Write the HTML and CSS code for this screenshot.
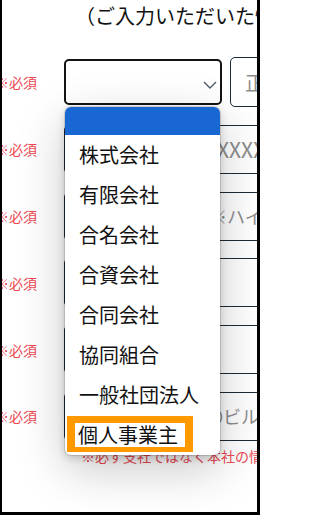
FILE: index.html
```html
<!DOCTYPE html>
<html lang="ja">
<head>
<meta charset="utf-8">
<title>お問い合わせフォーム</title>
<link rel="stylesheet" href="styles.css">
</head>
<body>
<div class="frame">
  <div class="lead"><span class="lead-text">（ご入力いただいた情報は、お問い合わせ対応にのみ使用いたします）</span></div>
  <form class="form">
    <div class="rows">
      <div class="row first">
        <span class="req">※必須</span>
        <div class="fields">
          <div class="select">
            <svg class="chev" width="14" height="8" viewBox="0 0 14 8"><polyline points="1,1 7,7 13,1" fill="none" stroke="#4f5a64" stroke-width="1.4"/></svg>
          </div>
          <input class="input short" type="text" placeholder="正式名称">
        </div>
      </div>
      <div class="row">
        <span class="req">※必須</span>
        <input class="input tel" type="text" placeholder="例）〇〇〇〇XXXXXXXX">
      </div>
      <div class="row">
        <span class="req">※必須</span>
        <input class="input" type="text" placeholder="例）〇〇〇〇〇 ※ハイフンなし">
      </div>
      <div class="row">
        <span class="req">※必須</span>
        <input class="input" type="text" placeholder="">
      </div>
      <div class="row">
        <span class="req">※必須</span>
        <input class="input" type="text" placeholder="">
      </div>
      <div class="row">
        <span class="req">※必須</span>
        <input class="input" type="text" placeholder="例）〇〇〇〇〇〇ビル">
      </div>
    </div>
    <p class="note">※必ず支社ではなく本社の情報を入力してください</p>
  </form>
  <ul class="popup">
    <li class="opt blank"></li>
    <li class="opt">株式会社</li>
    <li class="opt">有限会社</li>
    <li class="opt">合名会社</li>
    <li class="opt">合資会社</li>
    <li class="opt">合同会社</li>
    <li class="opt">協同組合</li>
    <li class="opt">一般社団法人</li>
    <li class="opt last"><span class="hl">個人事業主</span></li>
  </ul>
</div>
</body>
</html>
```
FILE: styles.css
```css
* { box-sizing: border-box; }
html {
  background: #fff;
}
body {
  margin: 0;
  width: 260px;
  height: 515px;
  overflow: hidden;
  background: #fff;
  font-family: "Noto Sans CJK JP", "Noto Sans", sans-serif;
}
.frame {
  position: relative;
  width: 260px;
  height: 515px;
  border-left: 2px solid #000;
  border-right: 3px solid #000;
  border-bottom: 3px solid #000;
  overflow: hidden;
  background: #fff;
}
.lead {
  height: 28px;
  padding: 4px 0 0 73px;
  overflow: hidden;
}
.lead-text {
  display: block;
  font-size: 20px;
  line-height: 24px;
  white-space: nowrap;
  color: #111;
}
.form {
  margin: 29px 0 0 -7px;
}
.rows {
  display: flex;
  flex-direction: column;
  gap: 17.8px;
}
.row {
  display: flex;
  align-items: center;
  height: 49px;
}
.row.first { height: 50px; }
.req {
  flex: 0 0 69px;
  font-size: 14px;
  line-height: 20px;
  color: #ec4852;
  white-space: nowrap;
}
.fields {
  display: flex;
  align-items: center;
  gap: 8px;
  flex: 0 0 auto;
}
.select {
  width: 158px;
  height: 46px;
  border: 2px solid #141414;
  border-radius: 5px;
  display: flex;
  justify-content: flex-end;
  align-items: center;
  padding-right: 3px;
  background: #fff;
}
.chev { display: block; margin-top: 6px; }
.input {
  flex: 0 0 240px;
  width: 240px;
  height: 49px;
  border: 1px solid #1d2b38;
  border-radius: 5px;
  padding: 0 14px;
  font-family: "Noto Sans CJK JP", "Noto Sans", sans-serif;
  font-size: 18px;
  color: #222;
  background: #fff;
  outline: none;
}
.input.tel { font-size: 21px; }
.input.short {
  flex: 0 0 100px;
  width: 100px;
  height: 50px;
  font-size: 20px;
}
.input::placeholder { color: #8d8d8d; }
.note {
  margin: 5px 0 0 86px;
  font-size: 14px;
  line-height: 20px;
  color: #ec4852;
  white-space: nowrap;
}
.popup {
  position: absolute;
  left: 63px;
  top: 107px;
  width: 155px;
  margin: 0;
  padding: 0;
  list-style: none;
  background: #fff;
  border-radius: 6px;
  overflow: hidden;
  box-shadow: 0 0 0 1px rgba(0,0,0,0.12), 0 3px 8px rgba(0,0,0,0.18), 0 14px 48px rgba(0,0,0,0.22);
}
.opt {
  height: 40px;
  display: flex;
  align-items: center;
  padding-left: 14px;
  font-size: 20px;
  line-height: 24px;
  color: #111;
  white-space: nowrap;
}
.opt.blank {
  height: 28px;
  background: #1967d2;
}
.opt.last {
  align-items: flex-start;
  padding-top: 1px;
}
.hl {
  display: inline-block;
  margin-left: -12px;
  border-style: solid;
  border-color: #ff9900;
  border-width: 7px 8px 5px 8px;
  padding: 0 7px 0 3px;
  line-height: 24px;
  background: #fff;
}
```
